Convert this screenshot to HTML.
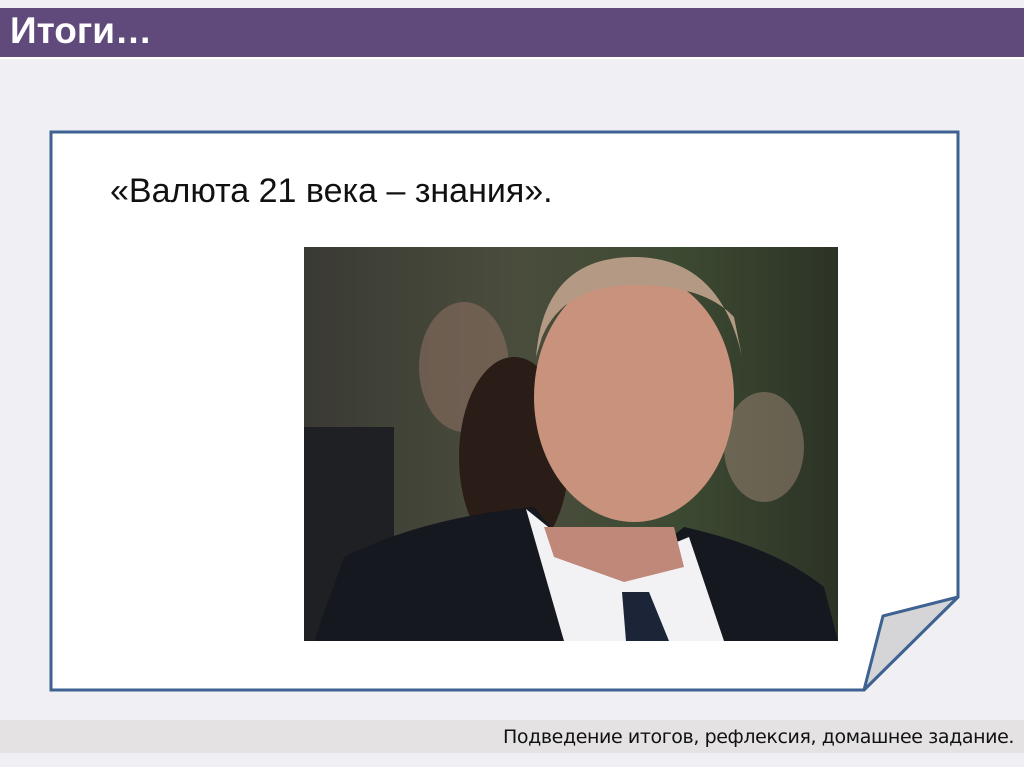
<!DOCTYPE html>
<html><head><meta charset="utf-8"><style>
body{margin:0;width:1024px;height:767px;background:#f0eff3;position:relative;overflow:hidden;font-family:"Liberation Sans",sans-serif}
.hd{position:absolute;left:0;top:8px;width:1024px;height:49px;background:#5f4a7b;border-bottom:2px solid #fff}
.hd span{position:absolute;left:10px;top:2px;color:#fff;font-weight:bold;font-size:37px;font-family:"Liberation Sans",sans-serif}
.ft{position:absolute;left:0;top:720px;width:1024px;height:33px;background:#e4e2e2}
.ft span{position:absolute;right:10px;top:6px;font-size:19px;color:#111;font-family:"DejaVu Sans",sans-serif;letter-spacing:-0.4px}
.q{position:absolute;left:110px;top:172px;font-size:34px;color:#111}
.ph{position:absolute;left:304px;top:247px;width:534px;height:394px;overflow:hidden;background:linear-gradient(90deg,#3a3a34,#4a4d3c 40%,#3d4a32 70%,#2c3326)}
</style></head><body>
<div class="hd"><span>Итоги…</span></div>
<svg style="position:absolute;left:0;top:0" width="1024" height="767">
<polygon points="51,132 958,132 958,597 864,690 51,690" fill="#fff" stroke="#3e6291" stroke-width="3"/>
<polygon points="958,597 883,616 864,690" fill="#d5d5d8" stroke="#3e6291" stroke-width="3" stroke-linejoin="round"/>
</svg>
<div class="q">«Валюта 21 века – знания».</div>
<div class="ph">
<svg width="534" height="394">
<ellipse cx="160" cy="120" rx="45" ry="65" fill="#8a6e60" opacity=".6"/>
<ellipse cx="210" cy="210" rx="55" ry="100" fill="#2a1c16"/>
<ellipse cx="460" cy="200" rx="40" ry="55" fill="#a08878" opacity=".5"/>
<rect x="0" y="180" width="90" height="214" fill="#1f2024"/>
<path d="M10 394 L40 310 Q120 270 230 260 L280 320 L330 320 L380 280 Q470 300 520 340 L534 394Z" fill="#15181f"/>
<path d="M222 262 L260 394 L420 394 L385 290 L300 325Z" fill="#f2f2f4"/>
<path d="M318 345 L345 345 L365 394 L322 394Z" fill="#1c2538"/>
<path d="M240 280 L370 280 L380 320 L320 335 L250 310Z" fill="#c08878"/>
<ellipse cx="330" cy="150" rx="100" ry="125" fill="#c9927c"/>
<path d="M232 110 Q240 10 330 10 Q420 10 440 120 L430 70 Q400 38 330 38 Q260 38 238 90Z" fill="#b49a84"/>
</svg></div>
<div class="ft"><span>Подведение итогов, рефлексия,  домашнее задание.</span></div>
</body></html>
